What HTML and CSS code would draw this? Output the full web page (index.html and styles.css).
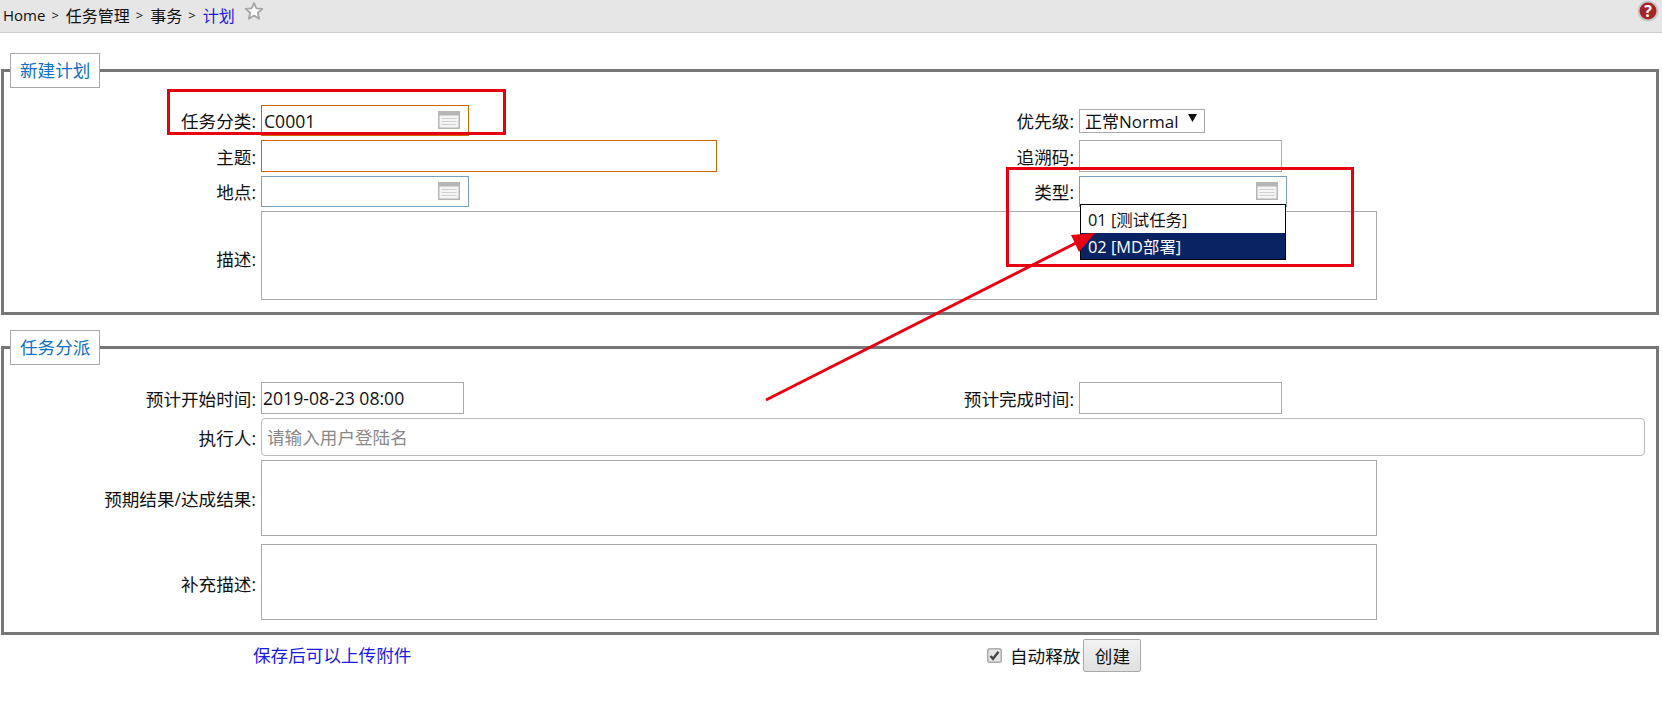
FILE: index.html
```html
<!DOCTYPE html>
<html lang="zh-CN">
<head>
    <meta charset="UTF-8">
    <title>计划</title>
    <link rel="stylesheet" href="styles.css">
</head>
<body>
    <div class="page-bar">
        <div class="crumbs">
            <span class="home">Home</span><span class="sep">&gt;</span>
            <span>任务管理</span><span class="sep">&gt;</span>
            <span>事务</span><span class="sep">&gt;</span>
            <a class="crumb-current">计划</a>
            <svg class="star" width="20" height="20" viewBox="0 0 20 20">
                <path d="M10 2 L12.4 7.3 L18.4 7.9 L13.8 11.8 L15.2 17.7 L10 14.6 L4.8 17.7 L6.2 11.8 L1.6 7.9 L7.6 7.3 Z" fill="#fff" stroke="#a6a6a6" stroke-width="1.8" stroke-linejoin="round" />
            </svg>
        </div>
        <svg class="help" width="22" height="22" viewBox="0 0 22 22">
            <circle cx="11" cy="11" r="10.5" fill="#c8c8c8" />
            <circle cx="11" cy="11" r="8.5" fill="#a52428" />
            <text x="11" y="16.5" class="help-mark">?</text>
        </svg>
    </div>

    <form class="task-form">
        <fieldset class="group">
            <legend>新建计划</legend>
            <div class="grid grid-new">
                <label>任务分类:</label>
                <div class="picker">
                    <input class="input required" type="text" value="C0001">
                    <svg class="picker-icon" width="22" height="18" viewBox="0 0 22 18">
                        <rect x="0.75" y="0.75" width="20.5" height="16.5" fill="#f4f4f4" stroke="#b5b5b5" stroke-width="1.5" />
                        <rect x="1" y="1" width="20" height="3.5" fill="#b5b5b5" />
                        <path d="M3.5 7.5 H18.5 M3.5 10.5 H18.5 M3.5 13.5 H18.5" stroke="#d0d0d0" />
                    </svg>
                </div>
                <label>优先级:</label>
                <div class="select-box">
                    <span>正常Normal</span>
                    <svg width="9" height="8" viewBox="0 0 9 8"><path d="M0 0 H9 L4.5 8 Z" fill="#111" /></svg>
                </div>

                <label>主题:</label>
                <input class="input required subject" type="text">
                <label>追溯码:</label>
                <input class="input trace" type="text">

                <label>地点:</label>
                <div class="picker">
                    <input class="input lookup" type="text">
                    <svg class="picker-icon" width="22" height="18" viewBox="0 0 22 18">
                        <rect x="0.75" y="0.75" width="20.5" height="16.5" fill="#f4f4f4" stroke="#b5b5b5" stroke-width="1.5" />
                        <rect x="1" y="1" width="20" height="3.5" fill="#b5b5b5" />
                        <path d="M3.5 7.5 H18.5 M3.5 10.5 H18.5 M3.5 13.5 H18.5" stroke="#d0d0d0" />
                    </svg>
                </div>
                <label>类型:</label>
                <div class="picker">
                    <input class="input lookup" type="text">
                    <svg class="picker-icon" width="22" height="18" viewBox="0 0 22 18">
                        <rect x="0.75" y="0.75" width="20.5" height="16.5" fill="#f4f4f4" stroke="#b5b5b5" stroke-width="1.5" />
                        <rect x="1" y="1" width="20" height="3.5" fill="#b5b5b5" />
                        <path d="M3.5 7.5 H18.5 M3.5 10.5 H18.5 M3.5 13.5 H18.5" stroke="#d0d0d0" />
                    </svg>
                    <ul class="dropdown">
                        <li>01 [测试任务]</li>
                        <li class="active">02 [MD部署]</li>
                    </ul>
                </div>

                <label class="label-low">描述:</label>
                <textarea class="input wide"></textarea>
            </div>
        </fieldset>

        <fieldset class="group">
            <legend>任务分派</legend>
            <div class="grid grid-assign">
                <label>预计开始时间:</label>
                <input class="input date" type="text" value="2019-08-23 08:00">
                <label>预计完成时间:</label>
                <input class="input trace" type="text">

                <label>执行人:</label>
                <input class="input user" type="text" placeholder="请输入用户登陆名">

                <label>预期结果/达成结果:</label>
                <textarea class="input wide"></textarea>

                <label class="label-low">补充描述:</label>
                <textarea class="input wide extra"></textarea>
            </div>
        </fieldset>

        <div class="form-foot">
            <a class="note">保存后可以上传附件</a>
            <div class="actions">
                <svg class="check" width="15" height="15" viewBox="0 0 15 15">
                    <rect x="0.75" y="0.75" width="13.5" height="13.5" rx="2" fill="#e4e4e4" stroke="#ababab" stroke-width="1.5" />
                    <path d="M3.5 8 L6 10.8 L11.5 3.8" fill="none" stroke="#444" stroke-width="2.4" />
                </svg>
                <span>自动释放</span>
                <button class="btn" type="button">创建</button>
            </div>
        </div>
    </form>

    <!-- red annotations drawn over the screenshot -->
    <svg class="marks" width="1662" height="712">
        <rect x="168.5" y="90.5" width="336" height="43" />
        <rect x="1007.5" y="168.5" width="345" height="97" />
        <path d="M766 400 L1078 242" />
        <polygon points="1095,233 1071,235 1079,252" />
    </svg>
</body>
</html>
```

FILE: styles.css
```css
* {
    box-sizing: border-box;
}

body {
    margin: 0;
    font-family: "Open Sans", "Noto Sans CJK SC", sans-serif;
    font-size: 17.6px;
    color: #111;
    background-color: #fff;
}

.page-bar {
    display: flex;
    justify-content: space-between;
    height: 33px;
    padding: 0 3px;
    background-color: #e6e6e6;
    border-bottom: 1px solid #ccc;
}

.crumbs {
    display: flex;
    align-items: center;
    height: 29px;
    font-size: 16px;
}

.crumbs .home {
    font-size: 15px;
}

.crumbs .sep {
    margin: 0 7px 0 6px;
    font-size: 13px;
}

.crumb-current {
    color: #1a1ae0;
}

.star {
    margin-left: 9px;
    margin-top: -7px;
}

.help-mark {
    font-size: 16px;
    font-weight: bold;
    fill: #fff;
    text-anchor: middle;
}

.task-form {
    padding: 0 3px 0 1px;
}

.group {
    margin: 0;
    padding: 17px 6px 12px;
    border: 3px solid #777;
}

.group legend {
    padding: 0 9px;
    height: 35px;
    line-height: 32px;
    color: #0f6fc6;
    background-color: #fff;
    border: 1px solid #aaa;
}

.group:first-of-type {
    margin-top: 20px;
}

.group + .group {
    margin-top: 15px;
}

.grid {
    display: grid;
    grid-template-columns: 247px 560px 250px 1fr;
    column-gap: 4px;
    row-gap: 4px;
}

.grid-new {
    grid-template-rows: 31px 32px 31px 89px;
}

.grid-assign {
    grid-template-rows: 32px 38px 76px 80px;
}

.grid label {
    align-self: center;
    margin-right: 1px;
    text-align: right;
    white-space: nowrap;
}

.grid .label-low {
    margin-top: 6px;
}

.input {
    display: block;
    height: 100%;
    padding: 0 2px;
    font: inherit;
    color: inherit;
    background-color: #fff;
    border: 1px solid #aaa;
    border-radius: 0;
    outline: none;
    resize: none;
}

.required {
    border-color: #cc6600;
}

.lookup {
    border-color: #7a9fc0;
}

.subject {
    width: 456px;
}

.trace {
    width: 203px;
}

.date {
    width: 203px;
    padding-left: 1px;
}

.wide {
    grid-column: 2 / 5;
    width: 1116px;
}

.extra {
    height: 76px;
    margin-top: 4px;
}

.user {
    grid-column: 2 / 5;
    width: 1384px;
    padding-left: 5px;
    border-color: #bbb;
    border-radius: 4px;
}

.user::placeholder {
    color: #888;
}

.picker {
    position: relative;
    width: 208px;
}

.picker .input {
    width: 100%;
}

.picker-icon {
    position: absolute;
    top: 6px;
    right: 9px;
}

.select-box {
    display: flex;
    align-items: center;
    justify-content: space-between;
    align-self: center;
    width: 126px;
    height: 24px;
    padding: 0 7px 0 5px;
    font-size: 17px;
    border: 1px solid #aaa;
}

.select-box svg {
    margin-top: -6px;
}

.dropdown {
    position: absolute;
    top: 28px;
    left: 1px;
    width: 206px;
    margin: 0;
    padding: 0;
    list-style: none;
    font-size: 16.4px;
    background-color: #fff;
    border: 1px solid #000;
}

.dropdown li {
    height: 28px;
    line-height: 29px;
    padding-left: 7px;
}

.dropdown li.active {
    height: 26px;
    line-height: 27px;
    color: #fff;
    background-color: #0a2463;
}

.form-foot {
    display: flex;
    align-items: flex-start;
    padding-left: 252px;
    margin-top: 4px;
}

.note {
    width: 734px;
    margin-top: 3px;
    color: #1a1ae0;
}

.actions {
    display: flex;
    align-items: center;
    gap: 3px;
}

.check {
    margin-right: 5px;
}

.btn {
    width: 58px;
    height: 33px;
    padding: 0;
    font: inherit;
    color: inherit;
    background: linear-gradient(#f2f2f2, #e0e0e0);
    border: 1px solid #aaa;
    border-radius: 2px;
}

.marks {
    position: absolute;
    top: 0;
    left: 0;
    pointer-events: none;
}

.marks rect,
.marks path {
    fill: none;
    stroke: #e60012;
    stroke-width: 3;
}

.marks polygon {
    fill: #e60012;
}
```
